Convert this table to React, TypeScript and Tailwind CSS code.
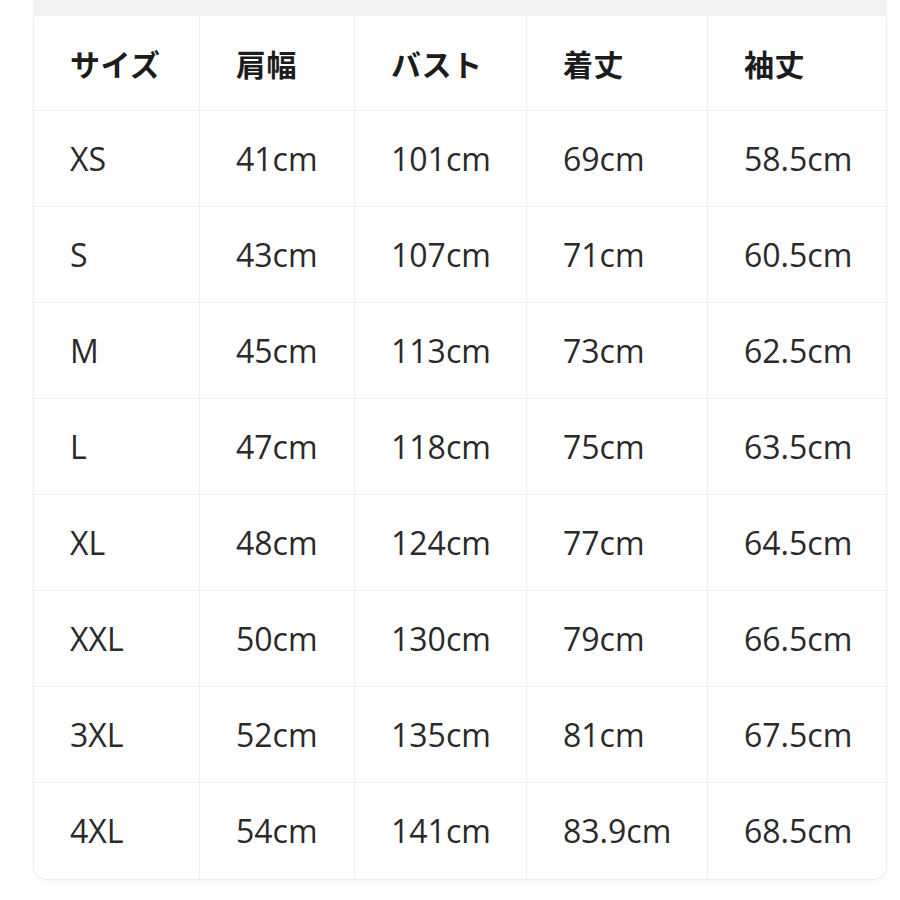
import React from "react";

const headers = ["サイズ", "肩幅", "バスト", "着丈", "袖丈"];

const rows = [
  ["XS", "41cm", "101cm", "69cm", "58.5cm"],
  ["S", "43cm", "107cm", "71cm", "60.5cm"],
  ["M", "45cm", "113cm", "73cm", "62.5cm"],
  ["L", "47cm", "118cm", "75cm", "63.5cm"],
  ["XL", "48cm", "124cm", "77cm", "64.5cm"],
  ["XXL", "50cm", "130cm", "79cm", "66.5cm"],
  ["3XL", "52cm", "135cm", "81cm", "67.5cm"],
  ["4XL", "54cm", "141cm", "83.9cm", "68.5cm"],
];

const App = () => {
  return (
    <div className="w-[900px] h-[900px] bg-white px-[33px] font-['Open_Sans','Noto_Sans_CJK_JP',sans-serif]">
      <div className="w-[854px]">
        {/* faded strip above the card */}
        <div className="h-[16px] bg-[#f3f3f5]" />
        <div className="rounded-b-[14px] border-l border-r border-b border-[#ececec] shadow-[0_2px_4px_rgba(0,0,0,0.04)] overflow-hidden">
          <div className="grid grid-cols-[166px_155px_172px_181px_180px]">
            {headers.map((h, i) => (
              <div
                key={h}
                className={`h-[95px] flex items-center pl-[36px] border-b border-[#efefef] ${
                  i < 4 ? "border-r" : ""
                }`}
              >
                <span className="text-[30px] font-bold text-[#1c1c1c] font-['Noto_Sans_CJK_JP',sans-serif] tracking-[0.5px]">
                  {h}
                </span>
              </div>
            ))}
            {rows.map((row, r) =>
              row.map((cell, i) => (
                <div
                  key={`${r}-${i}`}
                  className={`h-[96px] flex items-center pl-[36px] border-[#efefef] ${
                    i < 4 ? "border-r" : ""
                  } ${r < rows.length - 1 ? "border-b" : ""}`}
                >
                  <span className="text-[32px] text-[#2a2a2a]">{cell}</span>
                </div>
              ))
            )}
          </div>
        </div>
      </div>
    </div>
  );
};

export default App;
